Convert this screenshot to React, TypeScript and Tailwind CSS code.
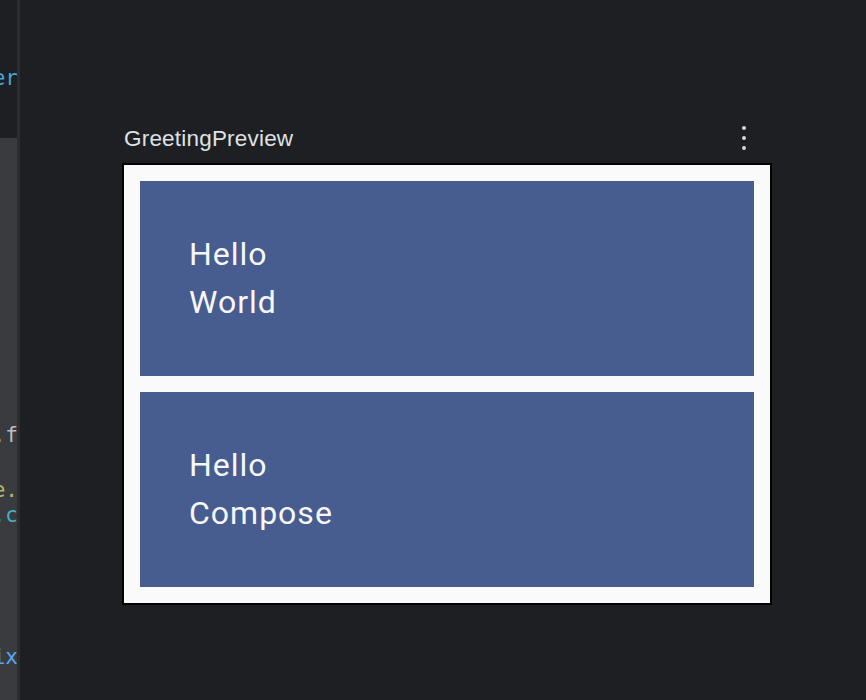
import React from "react";

const greetings = [
  { id: 1, lines: ["Hello", "World"] },
  { id: 2, lines: ["Hello", "Compose"] },
];

const codeFont = { fontFamily: '"DejaVu Sans Mono", "Liberation Mono", monospace' };

const CodeTail: React.FC<{ text: string; color: string; className?: string }> = ({
  text,
  color,
  className = "",
}) => (
  <div
    className={`flex justify-end overflow-hidden whitespace-nowrap text-[21px] leading-[24px] ${color} ${className}`}
    style={codeFont}
  >
    <span className="-mr-[1px]">{text}</span>
  </div>
);

const GreetingCard: React.FC<{ lines: string[] }> = ({ lines }) => (
  <div className="h-[195px] bg-[#475c8f] pl-[49px] pt-[49px]">
    {lines.map((line) => (
      <div
        key={line}
        className="text-[32px] leading-[48px] tracking-[1px] text-[#f7f7f9] font-['Roboto',sans-serif]"
      >
        {line}
      </div>
    ))}
  </div>
);

export default function App() {
  return (
    <div className="flex h-[700px] w-[866px] overflow-hidden bg-[#1e1f22]">
      {/* editor edge, mostly scrolled off */}
      <div className="flex w-[17px] flex-col">
        <div className="h-[138px] pt-[66px]">
          <CodeTail text="Greeter" color="text-[#3fa9dc]" />
        </div>
        <div className="flex-1 bg-[#3a3b3e]">
          <CodeTail text="Modifier.f" color="text-[#bcbec4]" className="mt-[285px]" />
          <CodeTail text="Surface." color="text-[#b6b56d]" className="mt-[31px]" />
          <CodeTail text="theme.c" color="text-[#3fb0c8]" className="mt-[1px]" />
          <CodeTail text="Greetix" color="text-[#56a8f5]" className="mt-[118px]" />
        </div>
      </div>
      <div className="w-[3px] bg-[#2b2d30]" />

      {/* preview pane */}
      <div className="flex-1 pl-[102px] pt-[123px]">
        <div className="flex w-[650px] items-center justify-between">
          <span
            className="pl-[2px] pt-[2px] text-[22.5px] leading-[28px] tracking-[0.2px] text-[#dfe1e5]"
            style={{ fontFamily: '"Liberation Sans", Arial, sans-serif' }}
          >
            GreetingPreview
          </span>
          <div className="mr-[26px] flex flex-col items-center gap-[6px]">
            <span className="h-[4px] w-[4px] rounded-full bg-[#d4d6da]" />
            <span className="h-[4px] w-[4px] rounded-full bg-[#d4d6da]" />
            <span className="h-[4px] w-[4px] rounded-full bg-[#d4d6da]" />
          </div>
        </div>

        <div className="mt-[10px] flex w-[650px] flex-col gap-4 border-2 border-black bg-[#fafafa] p-4">
          {greetings.map((g) => (
            <GreetingCard key={g.id} lines={g.lines} />
          ))}
        </div>
      </div>
    </div>
  );
}
